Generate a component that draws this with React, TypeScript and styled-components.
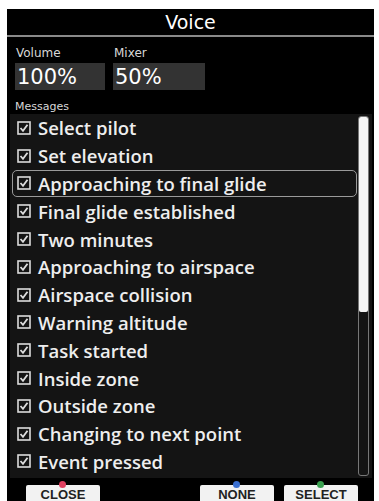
import styled, { createGlobalStyle } from "styled-components";

const GlobalStyle = createGlobalStyle`
  html, body {
    margin: 0;
    padding: 0;
    background: #fff;
  }
  body {
    font-family: "DejaVu Sans", "Liberation Sans", sans-serif;
  }
`;

const Screen = styled.div`
  width: 379px;
  height: 501px;
  padding: 9px 5px 0 7px;
  box-sizing: border-box;
  overflow: hidden;
`;

const Panel = styled.div`
  background: #000;
  height: 492px;
  display: flex;
  flex-direction: column;
  position: relative;
`;

const TitleBar = styled.div`
  height: 26px;
  border-bottom: 2px solid #8a8a8a;
  color: #fff;
  font-size: 19px;
  text-align: center;
  line-height: 26px;
`;

const Fields = styled.div`
  display: flex;
  gap: 8px;
  padding: 7px 0 0 8px;
`;

const Field = styled.div`
  display: flex;
  flex-direction: column;
`;

const SmallLabel = styled.div`
  color: #d8d8d8;
  font-size: 12px;
  height: 19px;
  line-height: 19px;
  padding-left: 1px;
`;

const ValueBox = styled.div<{ $w: number }>`
  width: ${(p) => p.$w}px;
  height: 27px;
  background: #333;
  color: #fff;
  font-size: 21px;
  line-height: 29px;
  padding-left: 2px;
  box-sizing: border-box;
`;

const MessagesLabel = styled(SmallLabel)`
  padding: 10px 0 0 8px;
  height: 14px;
  line-height: 14px;
  font-size: 11px;
`;

const ListArea = styled.div`
  flex: 1;
  margin: 0 2px 0 3px;
  background: #141414;
  display: flex;
`;

const List = styled.div`
  flex: 1;
  display: flex;
  flex-direction: column;
  padding-left: 2px;
`;

const Row = styled.div<{ $active?: boolean }>`
  height: 27.8px;
  flex-shrink: 0;
  display: flex;
  align-items: center;
  gap: 7px;
  padding-left: 4px;
  color: #eee;
  font-family: "Open Sans", "DejaVu Sans", sans-serif;
  font-size: 18.5px;
  font-weight: 600;
  border: 1px solid ${(p) => (p.$active ? "#9a9a9a" : "transparent")};
  border-radius: 5px;
  box-sizing: border-box;
`;

const Check = styled.span`
  width: 14px;
  height: 14px;
  display: inline-flex;
  flex-shrink: 0;
`;

const Track = styled.div`
  width: 9px;
  margin: 2px 3px 2px 1px;
  border: 1px solid #777;
  border-radius: 3px;
  display: flex;
  flex-direction: column;
`;

const Thumb = styled.div`
  height: 195px;
  background: #f4f4f4;
  border-radius: 2px;
`;

const ButtonBar = styled.div`
  height: 16px;
  display: flex;
  padding: 7px 0 0 19px;
`;

const Key = styled.div<{ $dot: string; $ml: number }>`
  position: relative;
  width: 74px;
  height: 22px;
  margin-left: ${(p) => p.$ml}px;
  background: #f2f2f2;
  border-radius: 2px;
  color: #222;
  font-family: "Liberation Sans", sans-serif;
  font-size: 13px;
  font-weight: bold;
  text-align: center;
  line-height: 20px;
  &::before {
    content: "";
    position: absolute;
    top: -4px;
    left: 50%;
    width: 7px;
    height: 7px;
    margin-left: -4px;
    border-radius: 50%;
    background: ${(p) => p.$dot};
  }
`;

const CheckIcon = () => (
  <Check>
    <svg width="14" height="14" viewBox="0 0 14 14">
      <rect x="1" y="1" width="12" height="12" fill="none" stroke="#ddd" strokeWidth="1.6" />
      <path d="M3.5 7 L6 9.8 L10.5 3.8" fill="none" stroke="#ddd" strokeWidth="1.8" />
    </svg>
  </Check>
);

const messages = [
  "Select pilot",
  "Set elevation",
  "Approaching to final glide",
  "Final glide established",
  "Two minutes",
  "Approaching to airspace",
  "Airspace collision",
  "Warning altitude",
  "Task started",
  "Inside zone",
  "Outside zone",
  "Changing to next point",
  "Event pressed",
];

const App = () => {
  return (
    <Screen>
      <GlobalStyle />
      <Panel>
        <TitleBar>Voice</TitleBar>
        <Fields>
          <Field>
            <SmallLabel>Volume</SmallLabel>
            <ValueBox $w={90}>100%</ValueBox>
          </Field>
          <Field>
            <SmallLabel>Mixer</SmallLabel>
            <ValueBox $w={92}>50%</ValueBox>
          </Field>
        </Fields>
        <MessagesLabel>Messages</MessagesLabel>
        <ListArea>
          <List>
            {messages.map((m, i) => (
              <Row key={m} $active={i === 2}>
                <CheckIcon />
                {m}
              </Row>
            ))}
          </List>
          <Track>
            <Thumb />
          </Track>
        </ListArea>
        <ButtonBar>
          <Key $dot="#e04060" $ml={0}>CLOSE</Key>
          <Key $dot="#3a6fd0" $ml={100}>NONE</Key>
          <Key $dot="#3aa050" $ml={10}>SELECT</Key>
        </ButtonBar>
      </Panel>
    </Screen>
  );
};

export default App;
